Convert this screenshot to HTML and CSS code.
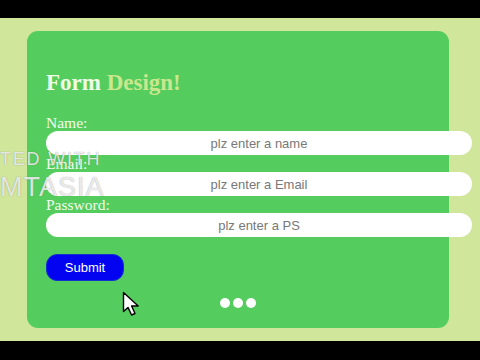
FILE: index.html
```html
<!DOCTYPE html>
<html lang="en">
<head>
    <meta charset="UTF-8">
    <meta name="viewport" content="width=device-width, initial-scale=1.0">
    <title>Form Design</title>
    <link rel="stylesheet" href="styles.css">
</head>
<body>
    <div class="bar"></div>

    <div class="stage">
        <form class="card">
            <h1 class="title">Form <span class="accent">Design!</span></h1>

            <label for="name" class="label">Name:</label>
            <input type="text" id="name" class="field" placeholder="plz enter a name"/>

            <label for="email" class="label">Email:</label>
            <input type="text" id="email" class="field" placeholder="plz enter a Email"/>

            <label for="ps" class="label">Password:</label>
            <input type="password" id="ps" class="field" placeholder="plz enter a PS"/>

            <input type="submit" class="submit" value="Submit"/>

            <div class="dots">
                <span class="dot"></span>
                <span class="dot"></span>
                <span class="dot"></span>
            </div>
        </form>
    </div>

    <div class="bar bottom"></div>

    <!-- recorder watermark + mouse pointer, both float over the page -->
    <div class="watermark">
        <div class="wm-small">TED WITH</div>
        <div class="wm-big">MTASIA</div>
    </div>

    <svg class="pointer" width="20" height="26" viewBox="0 0 20 26">
        <path d="M1.5 1.5 L1.5 20.5 L6 16.4 L9.6 24 L13 22.5 L9.6 15 L16.2 15 Z"
              fill="#fff" stroke="#000" stroke-width="1.4" stroke-linejoin="round"/>
    </svg>
</body>
</html>
```

FILE: styles.css
```css
*{
    box-sizing: border-box;
}
body{
    margin: 0;
    width: 480px;
    height: 360px;
    overflow: hidden;
    background-color: #000;
    position: relative;
}
.bar{
    height: 18px;
    background-color: #000;
}
.bar.bottom{
    height: 19px;
}
.stage{
    height: 323px;
    background-color: #cfe69b;
    padding: 13px 0 0 27px;
}
.card{
    width: 422px;
    height: 297px;
    margin: 0;
    padding: 40px 0 0 19px;
    background-color: #55cd5e;
    border-radius: 11px;
    display: flex;
    flex-direction: column;
    align-items: flex-start;
}
.title{
    margin: 0 0 20px 0;
    font-family: "Liberation Serif", serif;
    font-size: 23px;
    line-height: 23px;
    font-weight: bold;
    color: #effce6;
}
.accent{
    color: #c9e78f;
}
.label{
    font-family: "Liberation Serif", serif;
    font-size: 15.5px;
    line-height: 17px;
    height: 17px;
    color: #f3fcee;
}
.field{
    width: 426px;
    height: 24px;
    margin: 0;
    border: none;
    border-radius: 12px;
    background-color: #fff;
    text-align: center;
    font-family: "Liberation Sans", Arial, sans-serif;
    font-size: 13px;
    padding: 0;
    outline: none;
}
.field::placeholder{
    color: #787878;
}
.submit{
    margin-top: 17px;
    width: 78px;
    height: 27px;
    border: 1px solid #1230d0;
    border-radius: 11px;
    background-color: #0303f2;
    color: #fff;
    font-family: "Liberation Sans", Arial, sans-serif;
    font-size: 13px;
    padding: 0;
}
.dots{
    margin-top: 17px;
    align-self: center;
    margin-left: -19px;
    display: flex;
    gap: 3px;
}
.dot{
    width: 10px;
    height: 10px;
    border-radius: 50%;
    background-color: #fff;
}
.watermark{
    position: absolute;
    left: 0;
    top: 149px;
    font-family: "Liberation Sans", Arial, sans-serif;
    color: rgba(255, 255, 255, 0.8);
    text-shadow: 0 0 1px rgba(80, 80, 80, 0.6);
}
.wm-small{
    font-size: 18px;
    line-height: 20px;
    letter-spacing: 1.8px;
}
.wm-big{
    margin-top: 3px;
    font-size: 27px;
    line-height: 30px;
    letter-spacing: 1px;
}
.pointer{
    position: absolute;
    left: 122px;
    top: 291px;
}
```
